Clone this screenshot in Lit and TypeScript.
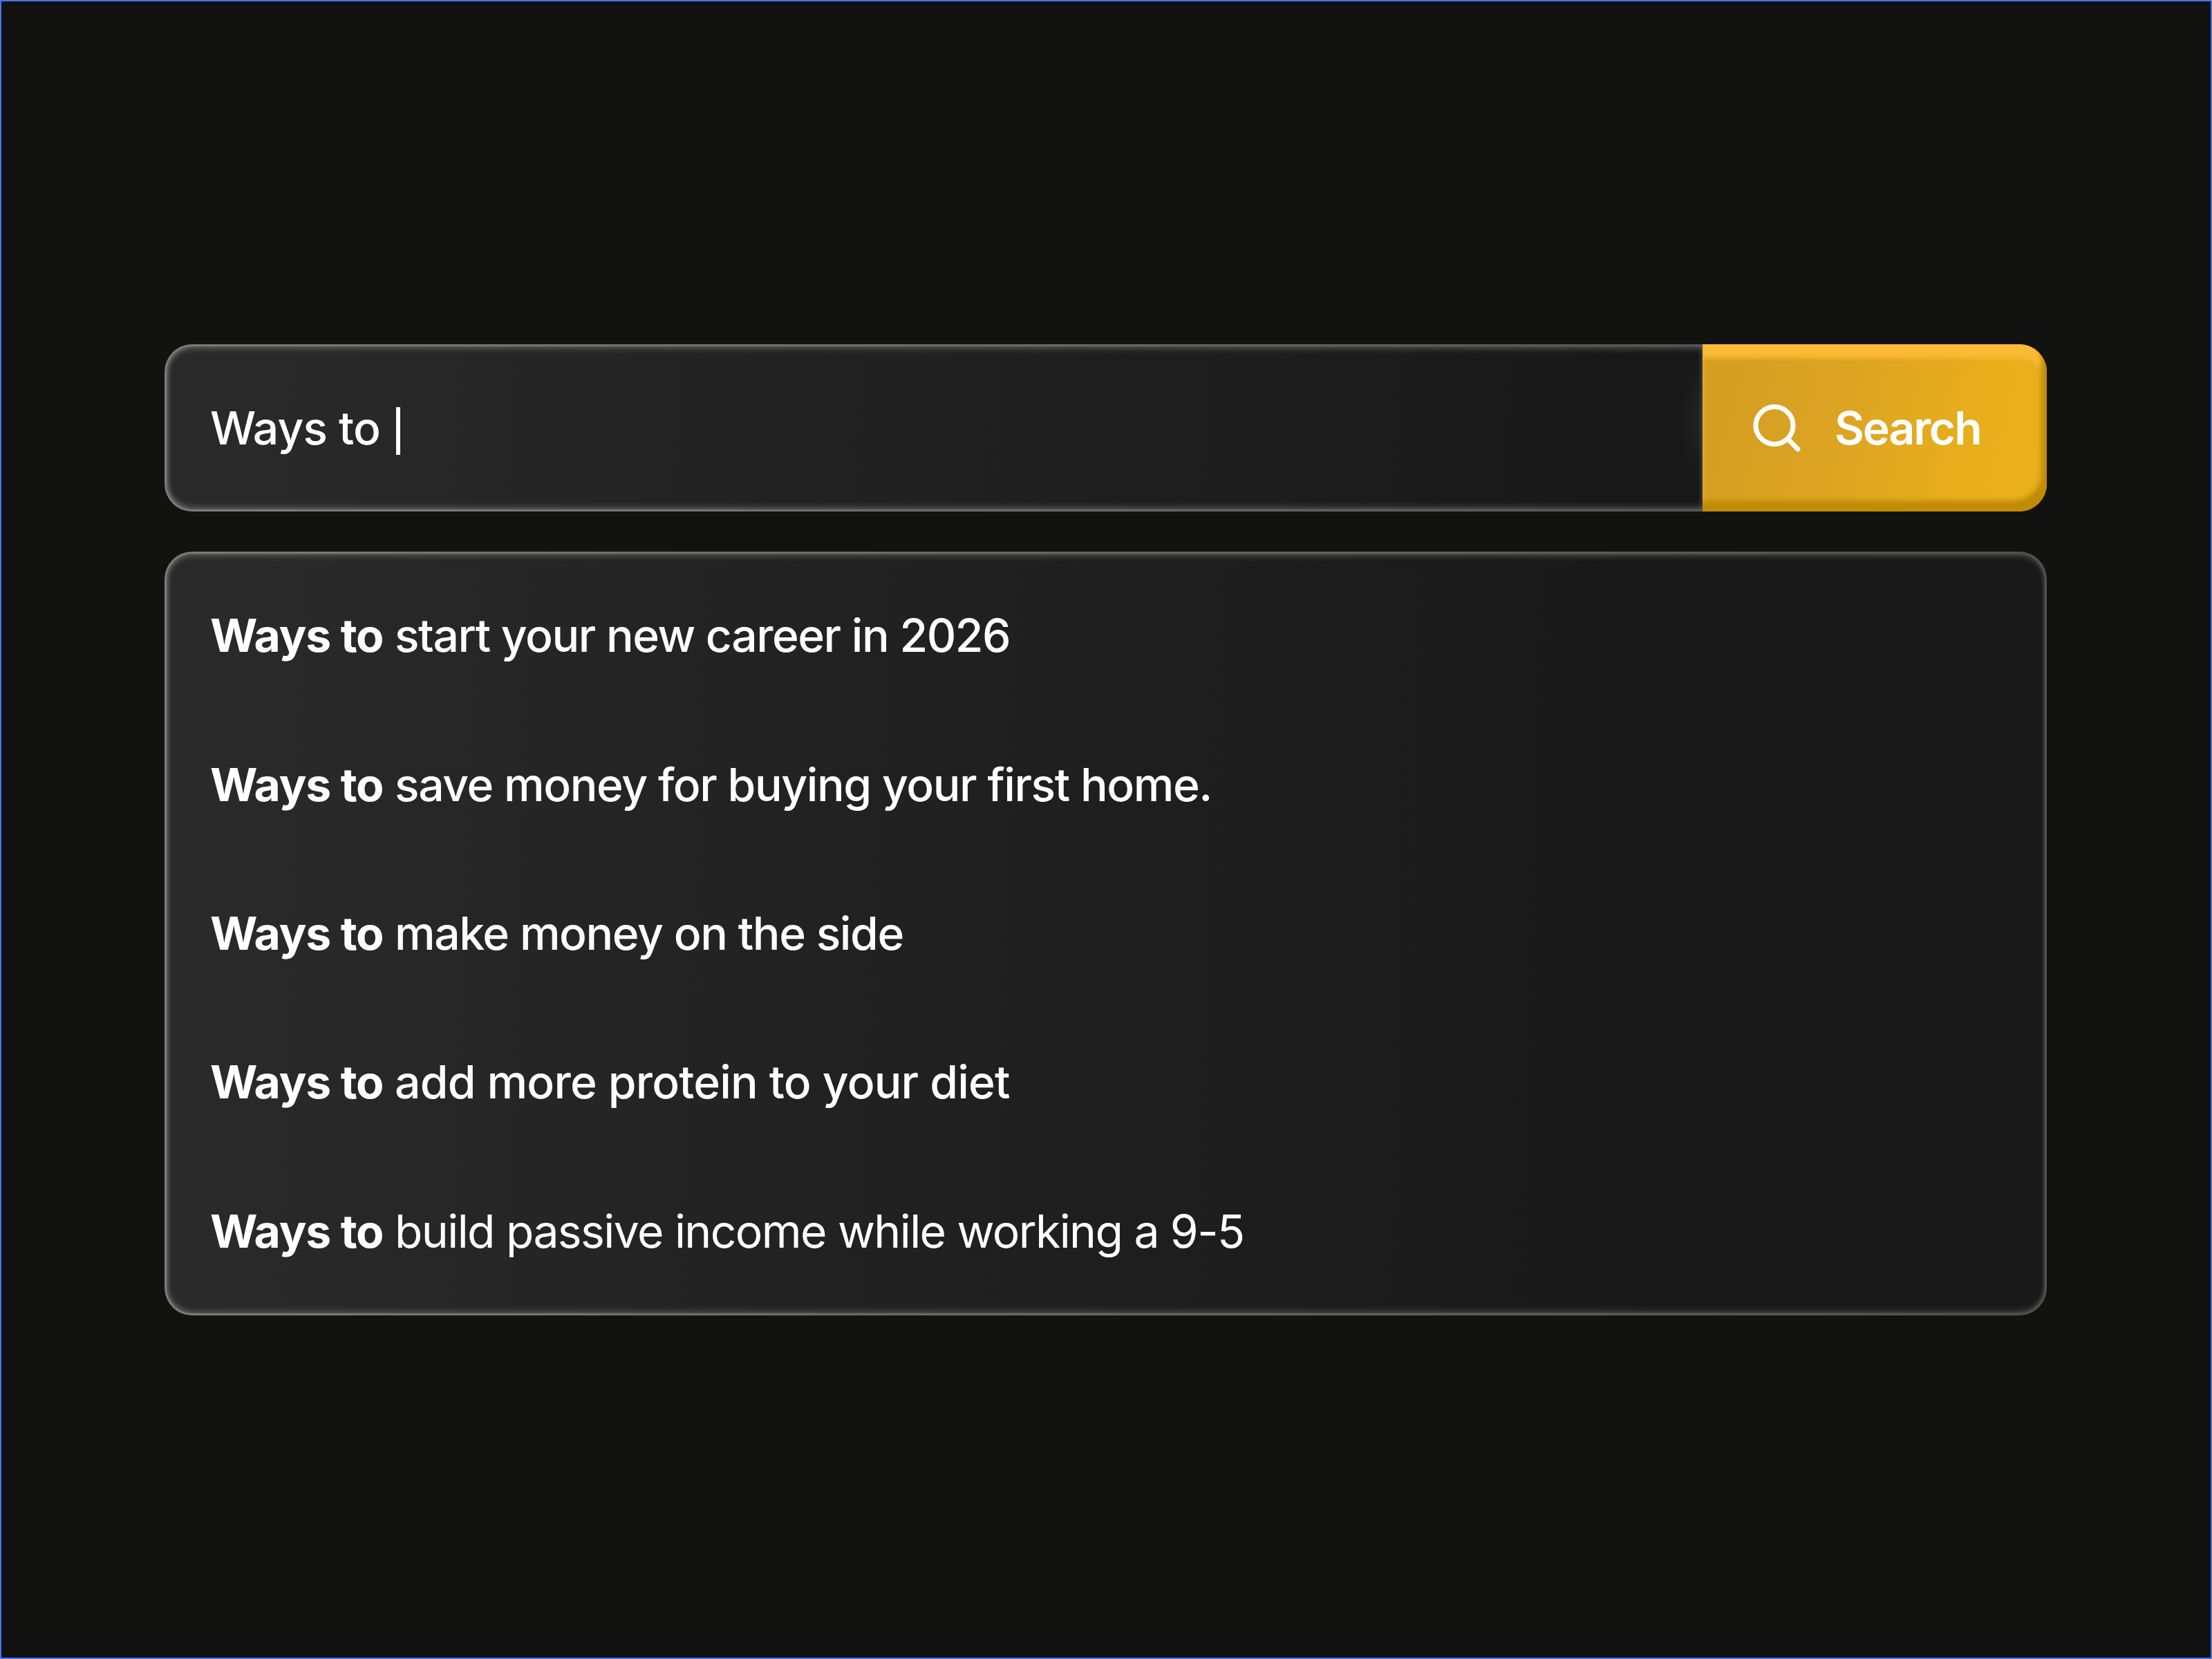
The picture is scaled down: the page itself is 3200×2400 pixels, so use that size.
import { LitElement, html, css } from 'lit';
import { customElement, property } from 'lit/decorators.js';

@customElement('suggestion-row')
export class SuggestionRow extends LitElement {
  @property() match = '';
  @property() rest = '';
  @property({ type: Number }) tracking = 0;

  static styles = css`
    :host {
      display: flex;
      align-items: center;
      height: 215.4px;
      padding-left: 63px;
      white-space: nowrap;
    }

    .match {
      width: 267px;
      font-weight: 700;
      letter-spacing: -1.1px;
    }

    .rest {
      font-weight: 500;
    }

    :host([light]) .rest {
      font-weight: 400;
    }
  `;

  render() {
    return html`
      <span class="match">${this.match}</span>
      <span class="rest" style="letter-spacing: ${this.tracking}px">${this.rest}</span>
    `;
  }
}

@customElement('search-button')
export class SearchButton extends LitElement {
  static styles = css`
    :host {
      display: block;
      flex: none;
      width: 498px;
    }

    .button {
      display: flex;
      align-items: center;
      box-sizing: border-box;
      width: 100%;
      height: 100%;
      padding: 0 0 0 70px;
      border: 0;
      border-radius: 0 40px 40px 0;
      background: linear-gradient(105deg, #d59e22 10%, #dea522 45%, #e8ae1c 75%, #eab01d 100%);
      box-shadow:
        inset -8px -16px 7px #c08c05,
        inset 0 20px 6px #fbba35;
      color: #fff;
      font: inherit;
      font-weight: 600;
      letter-spacing: -2.1px;
    }

    .icon {
      width: 76px;
      height: 76px;
      margin-right: 45px;
    }
  `;

  render() {
    return html`
      <button class="button">
        <svg class="icon" viewBox="0 0 76 76" fill="none" stroke="#fff" stroke-width="7" stroke-linecap="round">
          <circle cx="34" cy="34.5" r="27" />
          <path d="M54 54.6L67.8 68.8" />
        </svg>
        <span>Search</span>
      </button>
    `;
  }
}

@customElement('app-root')
export class AppRoot extends LitElement {
  static styles = css`
    :host {
      display: flex;
      flex-direction: column;
      gap: 58px;
      box-sizing: border-box;
      width: 3200px;
      height: 2400px;
      padding: 496px 237px 0 236px;
      border: 2px solid #4775ea;
      background: #121210;
      color: #fff;
      font-family: Inter, sans-serif;
      font-size: 66px;
      line-height: 80px;
    }

    .bar {
      display: flex;
      height: 242px;
    }

    .field,
    .panel {
      box-sizing: border-box;
      border: 3px solid transparent;
    }

    .field {
      display: flex;
      flex: 1;
      align-items: center;
      padding-left: 63px;
      border-right: 0;
      border-radius: 40px 0 0 40px;
      background:
        radial-gradient(ellipse 34px 90px at 100% 45%, #232323, transparent) padding-box,
        linear-gradient(94deg, #2a2a2a 2%, #222 40%, #1c1c1c 76%, #181818 95%) padding-box,
        linear-gradient(90deg, #7a7a7a, #6c6c6a 50%, #555) border-box;
      box-shadow:
        inset 0 5px 9px -1px rgba(255, 255, 255, 0.2),
        inset 0 -5px 9px -1px rgba(255, 255, 255, 0.2),
        inset 4px 0 6px -1px rgba(255, 255, 255, 0.17);
    }

    .query {
      width: 247px;
      letter-spacing: -0.85px;
      font-weight: 450;
      white-space: nowrap;
    }

    .caret {
      width: 6px;
      height: 69px;
      margin: 8px 0 0 22px;
      background: #fff;
    }

    .panel {
      height: 1104.5px;
      padding-top: 10.5px;
      border-radius: 40px;
      background:
        linear-gradient(92deg, #2a2a2a 2%, #222 34%, #1c1c1c 62%, #181818 80%) padding-box,
        linear-gradient(90deg, #7a7a7a, #666 50%, #505050) border-box;
      box-shadow:
        inset 0 5px 9px -1px rgba(255, 255, 255, 0.18),
        inset 0 -5px 9px -1px rgba(255, 255, 255, 0.16),
        inset 4px 0 6px -1px rgba(255, 255, 255, 0.15),
        inset -2px 0 5px -1px rgba(255, 255, 255, 0.08);
    }
  `;

  // the tracking keeps every line at its own measure
  private suggestions = [
    { text: 'start your new career in 2026', tracking: -1.45 },
    { text: 'save money for buying your first home.', tracking: -1.4 },
    { text: 'make money on the side', tracking: -1.4 },
    { text: 'add more protein to your diet', tracking: -0.79 },
    { text: 'build passive income while working a 9-5', tracking: -1.58, light: true },
  ];

  render() {
    return html`
      <div class="bar">
        <div class="field">
          <span class="query">Ways to</span>
          <span class="caret"></span>
        </div>
        <search-button></search-button>
      </div>
      <div class="panel">
        ${this.suggestions.map(
          (s) => html`
            <suggestion-row
              match="Ways to"
              .rest=${s.text}
              .tracking=${s.tracking}
              ?light=${s.light}
            ></suggestion-row>
          `
        )}
      </div>
    `;
  }
}
